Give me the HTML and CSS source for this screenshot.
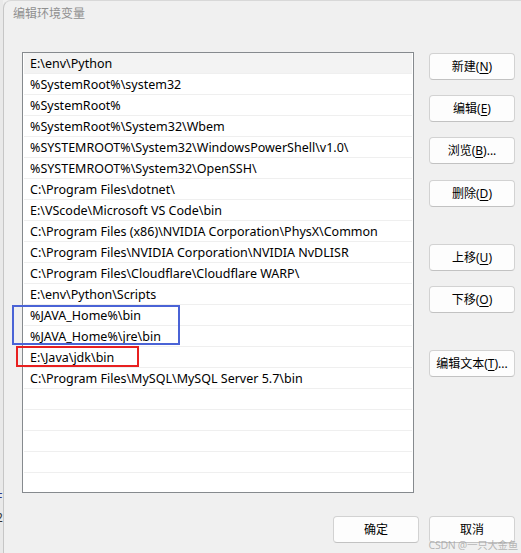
FILE: index.html
```html
<!DOCTYPE html>
<html lang="zh-CN">
<head>
<meta charset="utf-8">
<title>编辑环境变量</title>
<link rel="stylesheet" href="styles.css">
</head>
<body>
<div class="screen">
  <div class="behind">
    <span class="frag f1">F</span>
    <span class="frag f2">2</span>
  </div>
  <div class="dialog">
    <div class="titlebar">编辑环境变量</div>
    <div class="content">
      <div class="list">
        <div class="row selected">E:\env\Python</div>
        <div class="row">%SystemRoot%\system32</div>
        <div class="row">%SystemRoot%</div>
        <div class="row">%SystemRoot%\System32\Wbem</div>
        <div class="row">%SYSTEMROOT%\System32\WindowsPowerShell\v1.0\</div>
        <div class="row">%SYSTEMROOT%\System32\OpenSSH\</div>
        <div class="row">C:\Program Files\dotnet\</div>
        <div class="row">E:\VScode\Microsoft VS Code\bin</div>
        <div class="row">C:\Program Files (x86)\NVIDIA Corporation\PhysX\Common</div>
        <div class="row">C:\Program Files\NVIDIA Corporation\NVIDIA NvDLISR</div>
        <div class="row">C:\Program Files\Cloudflare\Cloudflare WARP\</div>
        <div class="row">E:\env\Python\Scripts</div>
        <div class="row">%JAVA_Home%\bin</div>
        <div class="row">%JAVA_Home%\jre\bin</div>
        <div class="row">E:\Java\jdk\bin</div>
        <div class="row">C:\Program Files\MySQL\MySQL Server 5.7\bin</div>
        <div class="row"></div>
        <div class="row"></div>
        <div class="row"></div>
        <div class="row"></div>
        <div class="row"></div>
      </div>
      <div class="side">
        <button class="btn b-new">新建(<u>N</u>)</button>
        <button class="btn b-edit">编辑(<u>E</u>)</button>
        <button class="btn b-browse">浏览(<u>B</u>)...</button>
        <button class="btn b-del">删除(<u>D</u>)</button>
        <button class="btn b-up">上移(<u>U</u>)</button>
        <button class="btn b-down">下移(<u>O</u>)</button>
        <button class="btn b-text">编辑文本(<u>T</u>)...</button>
      </div>
    </div>
    <div class="footer">
      <button class="btn">确定</button>
      <button class="btn">取消</button>
    </div>
  </div>
  <div class="mark mark-blue"></div>
  <div class="mark mark-red"></div>
  <div class="watermark">CSDN @一只大金鱼</div>
</div>
</body>
</html>
```

FILE: styles.css
```css
html, body {
  margin: 0;
  padding: 0;
}
body {
  background: #f0f0f0;
  font-family: "Noto Sans", "Noto Sans CJK SC", sans-serif;
  font-size: 12px;
  color: #000;
}
.screen {
  position: relative;
  width: 521px;
  height: 553px;
  overflow: hidden;
  display: flex;
}
.behind {
  width: 3px;
  flex: none;
  background: #e9e9e9;
  position: relative;
  overflow: hidden;
}
.frag {
  position: absolute;
  left: -4px;
  font-size: 12px;
  line-height: 12px;
}
.f1 { top: 492px; color: #2b3a8a; }
.f2 { top: 512px; color: #333; }
.dialog {
  flex: 1;
  border-left: 1px solid #c6c6c6;
  border-top: 1px solid #d8d8d8;
  border-top-left-radius: 8px;
  background: #f0f0f0;
  display: flex;
  flex-direction: column;
}
.titlebar {
  height: 51px;
  padding: 5px 0 0 9px;
  box-sizing: border-box;
  color: #8f8f8f;
  font-size: 12px;
  line-height: 16px;
}
.content {
  display: flex;
  padding-left: 18px;
}
.list {
  width: 392px;
  height: 441px;
  box-sizing: border-box;
  border: 1px solid #868a8e;
  background: #fff;
  padding: 0 1px;
  overflow: hidden;
}
.row {
  height: 20px;
  line-height: 22px;
  border-bottom: 1px solid #efefef;
  padding-left: 6px;
  white-space: nowrap;
  font-size: 12.5px;
  overflow: hidden;
}
.row.selected {
  background: #f3f3f3;
}
.side {
  display: flex;
  flex-direction: column;
  margin-left: 15px;
  padding-top: 1px;
}
.btn {
  width: 86px;
  height: 27px;
  box-sizing: border-box;
  border: 1px solid #d2d2d2;
  border-bottom-color: #c2c2c2;
  border-radius: 4px;
  background: #fdfdfd;
  font-family: "Noto Sans", "Noto Sans CJK SC", sans-serif;
  font-size: 12px;
  color: #000;
  padding: 0;
  line-height: 25px;
}
.btn u {
  text-underline-offset: 2px;
}
.b-edit, .b-browse, .b-down { margin-top: 15px; }
.b-del { margin-top: 16px; }
.b-up, .b-text { margin-top: 37px; }
.footer {
  display: flex;
  justify-content: flex-end;
  gap: 10px;
  padding: 23px 6px 0 0;
}
.mark {
  position: absolute;
  box-sizing: border-box;
  border: 2px solid;
}
.mark-blue {
  left: 12px;
  top: 305px;
  width: 168px;
  height: 40px;
  border-color: #4a63d6;
}
.mark-red {
  left: 16px;
  top: 346px;
  width: 123px;
  height: 21px;
  border-color: #e82020;
}
.watermark {
  position: absolute;
  right: 3px;
  bottom: 1px;
  font-size: 10.5px;
  line-height: 14px;
  color: rgba(160, 160, 160, 0.75);
  letter-spacing: -0.3px;
}
```
